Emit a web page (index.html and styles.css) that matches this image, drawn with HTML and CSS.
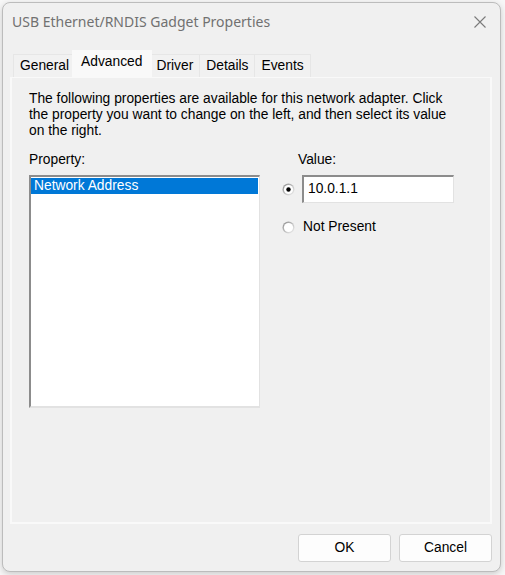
FILE: index.html
```html
<!DOCTYPE html>
<html>
<head>
<meta charset="utf-8">
<link rel="stylesheet" href="styles.css">
</head>
<body>
<div class="window">
  <div class="titlebar">
    <span class="title">USB Ethernet/RNDIS Gadget Properties</span>
    <svg class="close" width="12" height="12" viewBox="0 0 12 12"><path d="M0.5 0.5 L11.5 11.5 M11.5 0.5 L0.5 11.5" stroke="#7a7a7a" stroke-width="1.1" fill="none"/></svg>
  </div>
  <div class="body">
    <div class="tabs">
      <div class="tab">General</div>
      <div class="tab selected">Advanced</div>
      <div class="tab">Driver</div>
      <div class="tab">Details</div>
      <div class="tab">Events</div>
    </div>
    <div class="panel">
      <p class="intro">The following properties are available for this network adapter. Click<br>the property you want to change on the left, and then select its value<br>on the right.</p>
      <div class="props">
        <div class="col-left">
          <div class="label">Property:</div>
          <div class="listbox">
            <div class="item selected">Network Address</div>
          </div>
        </div>
        <div class="col-right">
          <div class="label value-label">Value:</div>
          <div class="radio-row">
            <svg class="radio" width="13" height="13" viewBox="0 0 13 13"><defs><linearGradient id="rg1" x1="0" y1="0" x2="1" y2="1"><stop offset="0" stop-color="#8a8a8a"/><stop offset="1" stop-color="#f4f4f4"/></linearGradient></defs><circle cx="6.5" cy="6.5" r="6" fill="url(#rg1)"/><circle cx="6.5" cy="6.5" r="4.6" fill="#ffffff"/><circle cx="6.5" cy="6.5" r="2.2" fill="#000"/></svg>
            <div class="textbox">10.0.1.1</div>
          </div>
          <div class="radio-row second">
            <svg class="radio" width="13" height="13" viewBox="0 0 13 13"><defs><linearGradient id="rg2" x1="0" y1="0" x2="1" y2="1"><stop offset="0" stop-color="#8a8a8a"/><stop offset="1" stop-color="#f4f4f4"/></linearGradient></defs><circle cx="6.5" cy="6.5" r="6" fill="url(#rg2)"/><circle cx="6.5" cy="6.5" r="4.6" fill="#ffffff"/></svg>
            <span class="radio-text">Not Present</span>
          </div>
        </div>
      </div>
    </div>
    <div class="buttons">
      <div class="btn">OK</div>
      <div class="btn">Cancel</div>
    </div>
  </div>
</div>
</body>
</html>
```
FILE: styles.css
```css
html, body {
  margin: 0;
  padding: 0;
}
body {
  background: #f7f7f7;
  width: 505px;
  height: 575px;
  overflow: hidden;
  font-family: "Liberation Sans", Arial, sans-serif;
  font-size: 13.8px;
  color: #000;
}
.window {
  box-sizing: border-box;
  margin: 2px 0 0 2px;
  width: 499px;
  height: 570px;
  border: 1px solid #bcbcbc;
  border-radius: 8px;
  background: #f0f0f0;
  box-shadow: 0 2px 6px rgba(0,0,0,0.18);
  display: flex;
  flex-direction: column;
}
.titlebar {
  height: 37px;
  display: flex;
  align-items: center;
  justify-content: space-between;
  padding: 0 14px 0 9px;
}
.title {
  font-family: "Noto Sans", "Segoe UI", sans-serif;
  font-size: 14px;
  color: #717171;
}
.close {
  display: block;
}
.body {
  flex: 1;
  display: flex;
  flex-direction: column;
  padding: 10px 8px 9px 7px;
}
.tabs {
  display: flex;
  align-items: flex-end;
  height: 27px;
  padding-left: 3px;
  position: relative;
  z-index: 1;
}
.tab {
  box-sizing: border-box;
  height: 23px;
  line-height: 22px;
  padding: 0 6px 0 6px;
  border: 1px solid #e6e6e6;
  border-bottom: none;
  margin-left: -1px;
  background: #f1f1f1;
}
.tab:first-child {
  margin-left: 0;
  padding-right: 5px;
}
.tab.selected {
  height: 28px;
  line-height: 22px;
  padding: 0 9px 0 8px;
  margin: 0 -2px -1px -3px;
  background: #f9f9f9;
  border-color: #f9f9f9;
  position: relative;
  z-index: 2;
}
.panel {
  box-sizing: border-box;
  height: 447px;
  border: 2px solid #f9f9f9;
  border-top-width: 1px;
  background: #f0f0f0;
  padding: 13px 12px 0 17px;
}
.intro {
  margin: 0;
  line-height: 16px;
  white-space: nowrap;
}
.props {
  display: flex;
  margin-top: 13px;
}
.label {
  line-height: 16px;
  height: 16px;
}
.col-left {
  width: 231px;
}
.listbox {
  box-sizing: border-box;
  margin-top: 7px;
  width: 231px;
  height: 233px;
  background: #fff;
  border-left: 2px solid #8c8c8c;
  border-top: 2px solid #8c8c8c;
  border-right: 1px solid #e2e2e2;
  border-bottom: 2px solid #e2e2e2;
  padding: 1px 1px 0 0;
}
.item {
  height: 16px;
  line-height: 16px;
  padding-left: 3px;
}
.item.selected {
  background: #0078d7;
  color: #fff;
}
.col-right {
  margin-left: 22px;
}
.value-label {
  padding-left: 16px;
}
.radio-row {
  display: flex;
  align-items: center;
  margin-top: 7px;
}
.radio-row.second {
  margin-top: 16px;
}
.radio {
  display: block;
  margin-right: 7px;
}
.textbox {
  box-sizing: border-box;
  width: 152px;
  height: 28px;
  background: #fff;
  border-left: 2px solid #8c8c8c;
  border-top: 2px solid #8c8c8c;
  border-right: 1px solid #e2e2e2;
  border-bottom: 1px solid #e2e2e2;
  padding-left: 4px;
  line-height: 23px;
}
.radio-text {
  line-height: 16px;
  margin-left: 1px;
}
.buttons {
  display: flex;
  justify-content: flex-end;
  gap: 8px;
  margin-top: 10px;
}
.btn {
  box-sizing: border-box;
  width: 93px;
  height: 28px;
  line-height: 26px;
  text-align: center;
  background: #fdfdfd;
  border: 1px solid #d3d3d3;
  border-radius: 3px;
}
```
